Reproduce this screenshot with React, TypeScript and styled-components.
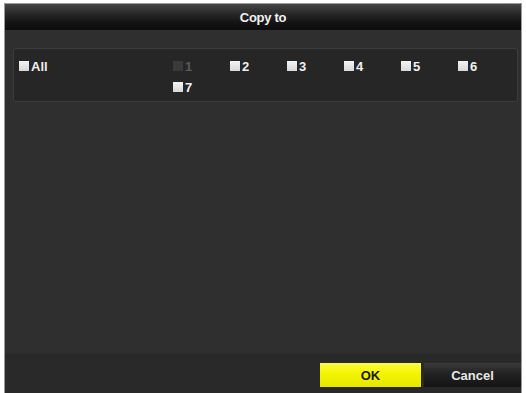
import React from "react";
import styled, { createGlobalStyle } from "styled-components";

const Global = createGlobalStyle`
  html, body { margin: 0; padding: 0; background: #ffffff; }
  body { font-family: "Liberation Sans", Arial, sans-serif; }
`;

const Dialog = styled.div`
  margin: 3px 0 0 4px;
  width: 518px;
  height: 390px;
  box-sizing: border-box;
  border: 1px solid #9a9a9a;
  border-bottom: none;
  background: #2f2f2f;
  display: flex;
  flex-direction: column;
`;

const TitleBar = styled.div`
  height: 26px;
  flex: none;
  display: flex;
  align-items: center;
  justify-content: center;
  background: linear-gradient(#464646 0%, #2a2a2a 35%, #141414 70%, #0c0c0c 100%);
  color: #f2f2f2;
  font-weight: bold;
  font-size: 13px;
  letter-spacing: -0.3px;
`;

const Body = styled.div`
  flex: 1;
  padding: 18px 3px 0 8px;
  background: #2f2f2f;
`;

const Panel = styled.div`
  height: 54px;
  box-sizing: border-box;
  border: 1px solid #3c3c3c;
  border-radius: 3px;
  background: #262626;
  display: flex;
  align-items: flex-start;
  padding: 9px 0 0 5px;
`;

const AllCell = styled.div`
  width: 154px;
  flex: none;
`;

const Grid = styled.div`
  display: grid;
  grid-template-columns: repeat(6, 57px);
  row-gap: 5px;
`;

const Item = styled.label<{ $disabled?: boolean }>`
  display: flex;
  align-items: center;
  gap: 2px;
  height: 16px;
  color: ${(p) => (p.$disabled ? "#5a5a5a" : "#f0f0f0")};
  font-weight: bold;
  font-size: 13px;
`;

const Box = styled.span<{ $disabled?: boolean }>`
  width: 10px;
  height: 10px;
  flex: none;
  background: ${(p) =>
    p.$disabled ? "#3a3a3a" : "linear-gradient(#f4f4f4, #d8d8d8)"};
`;

const Footer = styled.div`
  height: 40px;
  flex: none;
  background: #292929;
  display: flex;
  justify-content: flex-end;
  align-items: flex-start;
  gap: 3px;
  padding: 9px 0 0 0;
  box-sizing: border-box;
  border-top: 1px solid #2c2c2c;
`;

const Button = styled.button<{ $primary?: boolean }>`
  width: ${(p) => (p.$primary ? "101px" : "97px")};
  height: 24px;
  border: none;
  padding: 0;
  font-family: "Liberation Sans", Arial, sans-serif;
  font-weight: bold;
  font-size: 13px;
  color: ${(p) => (p.$primary ? "#1a1a00" : "#e6e6e6")};
  background: ${(p) =>
    p.$primary
      ? "linear-gradient(#fbfb40 0%, #f4f400 45%, #e6e600 100%)"
      : "linear-gradient(#3a3a3a 0%, #222 45%, #141414 100%)"};
`;

const items = [1, 2, 3, 4, 5, 6, 7];

export default function App() {
  return (
    <>
      <Global />
      <Dialog>
        <TitleBar>Copy to</TitleBar>
        <Body>
          <Panel>
            <AllCell>
              <Item>
                <Box />
                All
              </Item>
            </AllCell>
            <Grid>
              {items.map((n) => (
                <Item key={n} $disabled={n === 1}>
                  <Box $disabled={n === 1} />
                  {n}
                </Item>
              ))}
            </Grid>
          </Panel>
        </Body>
        <Footer>
          <Button $primary>OK</Button>
          <Button>Cancel</Button>
        </Footer>
      </Dialog>
    </>
  );
}
